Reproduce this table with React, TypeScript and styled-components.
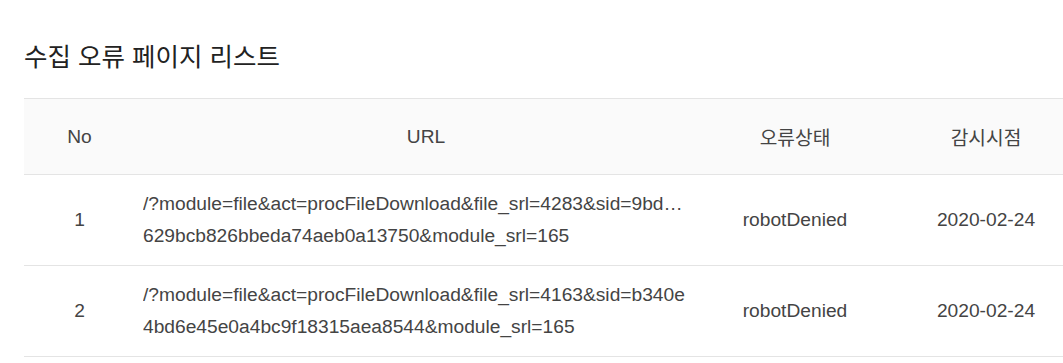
import React from 'react';
import styled, { createGlobalStyle } from 'styled-components';

interface ErrorRow {
    no: number;
    url: string[];
    status: string;
    date: string;
}

const rows: ErrorRow[] = [
    {
        no: 1,
        url: [
            '/?module=file&act=procFileDownload&file_srl=4283&sid=9bd\u2026',
            '629bcb826bbeda74aeb0a13750&module_srl=165',
        ],
        status: 'robotDenied',
        date: '2020-02-24',
    },
    {
        no: 2,
        url: [
            '/?module=file&act=procFileDownload&file_srl=4163&sid=b340e',
            '4bd6e45e0a4bc9f18315aea8544&module_srl=165',
        ],
        status: 'robotDenied',
        date: '2020-02-24',
    },
];

const GlobalStyle = createGlobalStyle`
    html, body {
        margin: 0;
        padding: 0;
        overflow: hidden;
        background: #ffffff;
    }
    body {
        font-family: "Liberation Sans", "Noto Sans CJK KR", Arial, sans-serif;
        color: #333333;
    }
`;

const Page = styled.div`
    padding: 0 0 0 24px;
    width: 1075px;
`;

const Title = styled.h2`
    margin: 37px 0 0;
    font-size: 25.5px;
    line-height: 40px;
    font-weight: 400;
    color: #222222;
`;

const Table = styled.table`
    margin-top: 21px;
    width: 1075px;
    border-collapse: collapse;
    table-layout: fixed;
    font-size: 19.2px;
`;

const HeadRow = styled.tr`
    background-color: #fafafa;
    border-top: 1px solid #e4e4e4;
    border-bottom: 1px solid #e4e4e4;
`;

const Th = styled.th`
    height: 75px;
    padding: 0;
    font-weight: 400;
    color: #444444;
    text-align: center;
`;

const Row = styled.tr`
    border-bottom: 1px solid #e4e4e4;
`;

const Td = styled.td<{ $align?: 'left' | 'center' }>`
    padding: 13px 8px;
    line-height: 32px;
    text-align: ${p => p.$align || 'center'};
    color: #444444;
    vertical-align: middle;
`;

const UrlLine = styled.span`
    display: block;
    white-space: nowrap;
    overflow: hidden;
`;

const App: React.FC = () => {
    return (
        <Page>
            <GlobalStyle />
            <Title>수집 오류 페이지 리스트</Title>
            <Table>
                <colgroup>
                    <col style={{ width: 111 }} />
                    <col style={{ width: 582 }} />
                    <col style={{ width: 156 }} />
                    <col style={{ width: 226 }} />
                </colgroup>
                <thead>
                    <HeadRow>
                        <Th>No</Th>
                        <Th>URL</Th>
                        <Th>오류상태</Th>
                        <Th>감시시점</Th>
                    </HeadRow>
                </thead>
                <tbody>
                    {rows.map(r => (
                        <Row key={r.no}>
                            <Td>{r.no}</Td>
                            <Td $align="left">
                                {r.url.map(line => (
                                    <UrlLine key={line}>{line}</UrlLine>
                                ))}
                            </Td>
                            <Td>{r.status}</Td>
                            <Td>{r.date}</Td>
                        </Row>
                    ))}
                </tbody>
            </Table>
        </Page>
    );
};

export default App;
